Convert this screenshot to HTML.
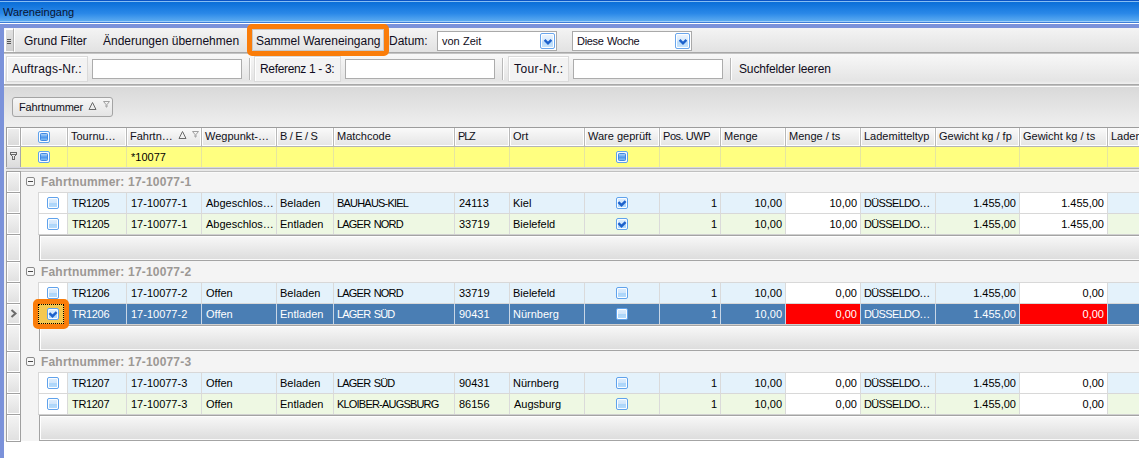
<!DOCTYPE html><html><head><meta charset="utf-8"><style>html,body{margin:0;padding:0}body{width:1139px;height:458px;overflow:hidden;position:relative;background:#fff;font-family:"Liberation Sans",sans-serif}div{box-sizing:border-box}</style></head><body>
<div style="position:absolute;left:0px;top:0px;width:1139px;height:1px;background:#0a52c4"></div>
<div style="position:absolute;left:0px;top:1px;width:1139px;height:1px;background:#86bdf3"></div>
<div style="position:absolute;left:0px;top:2px;width:1139px;height:19px;background:linear-gradient(#0a6ed8,#2a88e8 60%,#5aaaf0)"></div>
<div style="position:absolute;left:0px;top:21px;width:1139px;height:1px;background:#9fd0fa"></div>
<div style="position:absolute;left:0px;top:22px;width:1139px;height:1px;background:#3d7ed8"></div>
<div style="position:absolute;left:0px;top:23px;width:1139px;height:1px;background:#ffffff"></div>
<div style="position:absolute;left:3px;top:5px;white-space:nowrap;font:normal 11px/14px 'Liberation Sans', sans-serif;color:#0a1430;">Wareneingang</div>
<div style="position:absolute;left:0px;top:24px;width:1139px;height:4px;background:#7b92da"></div>
<div style="position:absolute;left:0px;top:24px;width:4px;height:434px;background:#7b92da"></div>
<div style="position:absolute;left:4px;top:28px;width:1135px;height:24px;background:linear-gradient(#f4f4f4,#e2e2e2);border-left:1px solid #fff"></div>
<div style="position:absolute;left:4px;top:52px;width:1135px;height:1px;background:#a8a8a8"></div>
<div style="position:absolute;left:4px;top:53px;width:1135px;height:1px;background:#c4c4c4"></div>
<div style="position:absolute;left:4px;top:28px;width:10px;height:24px;background:linear-gradient(#e2e2e2,#d0d0d0);border:1px solid #fafafa;border-right-color:#b0b0b0;box-shadow:inset 1px 1px 0 #fff"></div>
<div style="position:absolute;left:7px;top:39px;width:4px;height:1px;background:#555555"></div>
<div style="position:absolute;left:7px;top:41px;width:4px;height:1px;background:#555555"></div>
<div style="position:absolute;left:7px;top:43px;width:4px;height:1px;background:#555555"></div>
<div style="position:absolute;left:14px;top:28px;width:1px;height:24px;background:#ffffff"></div>
<div style="position:absolute;left:24px;top:34px;white-space:nowrap;font:normal 12px/15px 'Liberation Sans', sans-serif;color:#100c20;letter-spacing:-0.045px;">Grund Filter</div>
<div style="position:absolute;left:103px;top:34px;white-space:nowrap;font:normal 12px/15px 'Liberation Sans', sans-serif;color:#100c20;">Änderungen übernehmen</div>
<div style="position:absolute;left:252px;top:29px;width:132px;height:22px;background:linear-gradient(#f2f2f2,#e4e4e4);border:1px solid #c8c8c8"></div>
<div style="position:absolute;left:256px;top:34px;white-space:nowrap;font:normal 12px/15px 'Liberation Sans', sans-serif;color:#100c20;letter-spacing:-0.028px;">Sammel Wareneingang</div>
<div style="position:absolute;left:389px;top:34px;white-space:nowrap;font:normal 12px/15px 'Liberation Sans', sans-serif;color:#100c20;">Datum:</div>
<div style="position:absolute;left:437px;top:31px;width:120px;height:20px;background:#fff;border:1px solid #a9a9a9"></div>
<div style="position:absolute;left:442px;top:34px;white-space:nowrap;font:normal 11px/14px 'Liberation Sans', sans-serif;color:#100c20;word-spacing:0.5px;letter-spacing:-0.057px;">von Zeit</div>
<div style="position:absolute;left:540px;top:33px;width:15px;height:16px;border:1px solid #6aa6ec;border-radius:2px;background:linear-gradient(#eef6fe,#d6e9fc 50%,#b8dafa 55%,#c8e4fb);box-shadow:inset 0 0 0 1px #fff"></div>
<svg style="position:absolute;left:543px;top:37px" width="10" height="9" viewBox="0 0 10 9"><path d="M1.6 2.9 L5 6.3 L8.4 2.9" fill="none" stroke="#1e62cc" stroke-width="2.4"/></svg>
<div style="position:absolute;left:572px;top:31px;width:120px;height:20px;background:#fff;border:1px solid #a9a9a9"></div>
<div style="position:absolute;left:577px;top:34px;white-space:nowrap;font:normal 11px/14px 'Liberation Sans', sans-serif;color:#100c20;word-spacing:0.5px;letter-spacing:-0.300px;">Diese Woche</div>
<div style="position:absolute;left:675px;top:33px;width:15px;height:16px;border:1px solid #6aa6ec;border-radius:2px;background:linear-gradient(#eef6fe,#d6e9fc 50%,#b8dafa 55%,#c8e4fb);box-shadow:inset 0 0 0 1px #fff"></div>
<svg style="position:absolute;left:678px;top:37px" width="10" height="9" viewBox="0 0 10 9"><path d="M1.6 2.9 L5 6.3 L8.4 2.9" fill="none" stroke="#1e62cc" stroke-width="2.4"/></svg>
<div style="position:absolute;left:4px;top:54px;width:1135px;height:30px;background:linear-gradient(#f8f8f8,#e4e4e4 90%,#f0f0f0);border-left:1px solid #fff"></div>
<div style="position:absolute;left:4px;top:84px;width:1135px;height:1px;background:#a8a8a8"></div>
<div style="position:absolute;left:4px;top:85px;width:1135px;height:1px;background:#c0c0c0"></div>
<div style="position:absolute;left:4px;top:86px;width:1135px;height:1px;background:#fbfbfb"></div>
<div style="position:absolute;left:6px;top:56px;width:82px;height:26px;background:#f3f3f3;border:1px solid #dadada;box-shadow:inset 1px 1px 0 #fff"></div>
<div style="position:absolute;left:12px;top:62px;white-space:nowrap;font:normal 12px/15px 'Liberation Sans', sans-serif;color:#100c20;letter-spacing:0.183px;">Auftrags-Nr.:</div>
<div style="position:absolute;left:92px;top:59px;width:150px;height:20px;background:#fff;border:1px solid #acacac"></div>
<div style="position:absolute;left:249px;top:58px;width:1px;height:22px;background:#b8b8b8"></div>
<div style="position:absolute;left:250px;top:58px;width:1px;height:22px;background:#ffffff"></div>
<div style="position:absolute;left:254px;top:56px;width:87px;height:26px;background:#f3f3f3;border:1px solid #dadada;box-shadow:inset 1px 1px 0 #fff"></div>
<div style="position:absolute;left:260px;top:62px;white-space:nowrap;font:normal 12px/15px 'Liberation Sans', sans-serif;color:#100c20;letter-spacing:-0.343px;">Referenz 1 - 3:</div>
<div style="position:absolute;left:345px;top:59px;width:150px;height:20px;background:#fff;border:1px solid #acacac"></div>
<div style="position:absolute;left:502px;top:58px;width:1px;height:22px;background:#b8b8b8"></div>
<div style="position:absolute;left:503px;top:58px;width:1px;height:22px;background:#ffffff"></div>
<div style="position:absolute;left:508px;top:56px;width:61px;height:26px;background:#f3f3f3;border:1px solid #dadada;box-shadow:inset 1px 1px 0 #fff"></div>
<div style="position:absolute;left:514px;top:62px;white-space:nowrap;font:normal 12px/15px 'Liberation Sans', sans-serif;color:#100c20;letter-spacing:0.400px;">Tour-Nr.:</div>
<div style="position:absolute;left:573px;top:59px;width:150px;height:20px;background:#fff;border:1px solid #acacac"></div>
<div style="position:absolute;left:730px;top:58px;width:1px;height:22px;background:#b8b8b8"></div>
<div style="position:absolute;left:731px;top:58px;width:1px;height:22px;background:#ffffff"></div>
<div style="position:absolute;left:739px;top:62px;white-space:nowrap;font:normal 12px/15px 'Liberation Sans', sans-serif;color:#100c20;letter-spacing:-0.138px;">Suchfelder leeren</div>
<div style="position:absolute;left:4px;top:87px;width:1135px;height:40px;background:linear-gradient(#d9d9d9,#efefef)"></div>
<div style="position:absolute;left:12px;top:97px;width:101px;height:20px;border:1px solid #a4a4a4;border-radius:3px;background:linear-gradient(#f6f6f6,#e4e4e4)"></div>
<div style="position:absolute;left:19px;top:100px;white-space:nowrap;font:normal 11px/14px 'Liberation Sans', sans-serif;color:#101020;letter-spacing:-0.180px;">Fahrtnummer</div>
<svg style="position:absolute;left:88px;top:101px" width="10" height="10" viewBox="0 0 10 10"><path d="M4.5 1.5 L8 8.5 L1 8.5 Z" fill="none" stroke="#6a6a6a" stroke-width="1"/></svg>
<svg style="position:absolute;left:103px;top:101px" width="8" height="7" viewBox="0 0 8 7"><path d="M0.5 0.5 H6.5 L4 3.5 V6 H3 V3.5 Z" fill="none" stroke="#a0a0a0" stroke-width="1"/></svg>
<div style="position:absolute;left:4px;top:127px;width:1135px;height:331px;background:#ffffff"></div>
<div style="position:absolute;left:4px;top:127px;width:2px;height:314px;background:#f0f0f0"></div>
<svg width="0" height="0" style="position:absolute"><defs><linearGradient id="gc" x1="0" y1="0" x2="0" y2="1"><stop offset="0" stop-color="#dcecfc"/><stop offset="0.5" stop-color="#cfe5fb"/><stop offset="0.5" stop-color="#abd5fa"/><stop offset="1" stop-color="#b4dafb"/></linearGradient><linearGradient id="gi" x1="0" y1="0" x2="0" y2="1"><stop offset="0" stop-color="#b8dafa"/><stop offset="0.55" stop-color="#4f98ec"/><stop offset="1" stop-color="#8cc4f6"/></linearGradient></defs></svg>
<div style="position:absolute;left:6px;top:127px;width:1133px;height:20px;background:linear-gradient(#fafafa,#e4e4e4);border-top:1px solid #9c9c9c;border-left:1px solid #9c9c9c;border-bottom:1px solid #b4b4b4"></div>
<div style="position:absolute;left:7px;top:128px;width:13px;height:18px;background:linear-gradient(#eeeeee,#dadada);box-shadow:inset 1px 1px 0 #fff,inset -1px -1px 0 #fff"></div>
<div style="position:absolute;left:20px;top:128px;width:1px;height:18px;background:#a8a8a8"></div>
<div style="position:absolute;left:21px;top:128px;width:46px;height:18px;box-shadow:inset 1px 0 0 #fff,inset -1px -1px 0 #fff"></div>
<svg style="position:absolute;left:38px;top:131px" width="12" height="12" viewBox="0 0 12 12"><rect x="0.5" y="0.5" width="11" height="11" rx="1.5" fill="#fbfdff" stroke="#5fa2ec"/><rect x="2.5" y="2.5" width="7" height="7" rx="0.8" fill="url(#gi)" stroke="#4088e2"/></svg>
<div style="position:absolute;left:67px;top:128px;width:1px;height:18px;background:#b8b8b8"></div>
<div style="position:absolute;left:68px;top:128px;width:58px;height:18px;box-shadow:inset 1px 0 0 #fff,inset -1px -1px 0 #fff"></div>
<div style="position:absolute;left:71px;top:129px;white-space:nowrap;font:normal 11px/14px 'Liberation Sans', sans-serif;color:#101018;">Tournu…</div>
<div style="position:absolute;left:126px;top:128px;width:1px;height:18px;background:#b8b8b8"></div>
<div style="position:absolute;left:127px;top:128px;width:74px;height:18px;box-shadow:inset 1px 0 0 #fff,inset -1px -1px 0 #fff"></div>
<div style="position:absolute;left:130px;top:129px;white-space:nowrap;font:normal 11px/14px 'Liberation Sans', sans-serif;color:#101018;">Fahrtn…</div>
<div style="position:absolute;left:201px;top:128px;width:1px;height:18px;background:#b8b8b8"></div>
<div style="position:absolute;left:202px;top:128px;width:74px;height:18px;box-shadow:inset 1px 0 0 #fff,inset -1px -1px 0 #fff"></div>
<div style="position:absolute;left:205px;top:129px;white-space:nowrap;font:normal 11px/14px 'Liberation Sans', sans-serif;color:#101018;">Wegpunkt-…</div>
<div style="position:absolute;left:276px;top:128px;width:1px;height:18px;background:#b8b8b8"></div>
<div style="position:absolute;left:277px;top:128px;width:56px;height:18px;box-shadow:inset 1px 0 0 #fff,inset -1px -1px 0 #fff"></div>
<div style="position:absolute;left:280px;top:129px;white-space:nowrap;font:normal 11px/14px 'Liberation Sans', sans-serif;color:#101018;letter-spacing:-0.300px;">B / E / S</div>
<div style="position:absolute;left:333px;top:128px;width:1px;height:18px;background:#b8b8b8"></div>
<div style="position:absolute;left:334px;top:128px;width:120px;height:18px;box-shadow:inset 1px 0 0 #fff,inset -1px -1px 0 #fff"></div>
<div style="position:absolute;left:337px;top:129px;white-space:nowrap;font:normal 11px/14px 'Liberation Sans', sans-serif;color:#101018;">Matchcode</div>
<div style="position:absolute;left:454px;top:128px;width:1px;height:18px;background:#b8b8b8"></div>
<div style="position:absolute;left:455px;top:128px;width:54px;height:18px;box-shadow:inset 1px 0 0 #fff,inset -1px -1px 0 #fff"></div>
<div style="position:absolute;left:458px;top:129px;white-space:nowrap;font:normal 11px/14px 'Liberation Sans', sans-serif;color:#101018;letter-spacing:-1.200px;">PLZ</div>
<div style="position:absolute;left:509px;top:128px;width:1px;height:18px;background:#b8b8b8"></div>
<div style="position:absolute;left:510px;top:128px;width:74px;height:18px;box-shadow:inset 1px 0 0 #fff,inset -1px -1px 0 #fff"></div>
<div style="position:absolute;left:513px;top:129px;white-space:nowrap;font:normal 11px/14px 'Liberation Sans', sans-serif;color:#101018;">Ort</div>
<div style="position:absolute;left:584px;top:128px;width:1px;height:18px;background:#b8b8b8"></div>
<div style="position:absolute;left:585px;top:128px;width:74px;height:18px;box-shadow:inset 1px 0 0 #fff,inset -1px -1px 0 #fff"></div>
<div style="position:absolute;left:588px;top:129px;white-space:nowrap;font:normal 11px/14px 'Liberation Sans', sans-serif;color:#101018;">Ware geprüft</div>
<div style="position:absolute;left:659px;top:128px;width:1px;height:18px;background:#b8b8b8"></div>
<div style="position:absolute;left:660px;top:128px;width:60px;height:18px;box-shadow:inset 1px 0 0 #fff,inset -1px -1px 0 #fff"></div>
<div style="position:absolute;left:663px;top:129px;white-space:nowrap;font:normal 11px/14px 'Liberation Sans', sans-serif;color:#101018;letter-spacing:-0.457px;">Pos. UWP</div>
<div style="position:absolute;left:720px;top:128px;width:1px;height:18px;background:#b8b8b8"></div>
<div style="position:absolute;left:721px;top:128px;width:64px;height:18px;box-shadow:inset 1px 0 0 #fff,inset -1px -1px 0 #fff"></div>
<div style="position:absolute;left:724px;top:129px;white-space:nowrap;font:normal 11px/14px 'Liberation Sans', sans-serif;color:#101018;">Menge</div>
<div style="position:absolute;left:785px;top:128px;width:1px;height:18px;background:#b8b8b8"></div>
<div style="position:absolute;left:786px;top:128px;width:74px;height:18px;box-shadow:inset 1px 0 0 #fff,inset -1px -1px 0 #fff"></div>
<div style="position:absolute;left:789px;top:129px;white-space:nowrap;font:normal 11px/14px 'Liberation Sans', sans-serif;color:#101018;">Menge / ts</div>
<div style="position:absolute;left:860px;top:128px;width:1px;height:18px;background:#b8b8b8"></div>
<div style="position:absolute;left:861px;top:128px;width:74px;height:18px;box-shadow:inset 1px 0 0 #fff,inset -1px -1px 0 #fff"></div>
<div style="position:absolute;left:864px;top:129px;white-space:nowrap;font:normal 11px/14px 'Liberation Sans', sans-serif;color:#101018;">Lademitteltyp</div>
<div style="position:absolute;left:935px;top:128px;width:1px;height:18px;background:#b8b8b8"></div>
<div style="position:absolute;left:936px;top:128px;width:83px;height:18px;box-shadow:inset 1px 0 0 #fff,inset -1px -1px 0 #fff"></div>
<div style="position:absolute;left:939px;top:129px;white-space:nowrap;font:normal 11px/14px 'Liberation Sans', sans-serif;color:#101018;">Gewicht kg / fp</div>
<div style="position:absolute;left:1019px;top:128px;width:1px;height:18px;background:#b8b8b8"></div>
<div style="position:absolute;left:1020px;top:128px;width:87px;height:18px;box-shadow:inset 1px 0 0 #fff,inset -1px -1px 0 #fff"></div>
<div style="position:absolute;left:1023px;top:129px;white-space:nowrap;font:normal 11px/14px 'Liberation Sans', sans-serif;color:#101018;">Gewicht kg / ts</div>
<div style="position:absolute;left:1107px;top:128px;width:1px;height:18px;background:#b8b8b8"></div>
<div style="position:absolute;left:1108px;top:128px;width:31px;height:18px;box-shadow:inset 1px 0 0 #fff,inset -1px -1px 0 #fff"></div>
<div style="position:absolute;left:1111px;top:129px;white-space:nowrap;font:normal 11px/14px 'Liberation Sans', sans-serif;color:#101018;">Laden</div>
<svg style="position:absolute;left:178px;top:130px" width="10" height="10" viewBox="0 0 10 10"><path d="M4.5 1.5 L8 8.5 L1 8.5 Z" fill="none" stroke="#6a6a6a" stroke-width="1"/></svg>
<svg style="position:absolute;left:192px;top:131px" width="8" height="7" viewBox="0 0 8 7"><path d="M0.5 0.5 H6.5 L4 3.5 V6 H3 V3.5 Z" fill="none" stroke="#a0a0a0" stroke-width="1"/></svg>
<div style="position:absolute;left:6px;top:147px;width:1133px;height:20px;background:#ffff80;border-left:1px solid #9c9c9c"></div>
<div style="position:absolute;left:7px;top:147px;width:13px;height:20px;background:linear-gradient(#f0f0f0,#dcdcdc);border-top:1px solid #fff"></div>
<div style="position:absolute;left:20px;top:147px;width:1px;height:20px;background:#a8a8a8"></div>
<div style="position:absolute;left:67px;top:147px;width:1px;height:20px;background:#e6e6a0"></div>
<div style="position:absolute;left:126px;top:147px;width:1px;height:20px;background:#e6e6a0"></div>
<div style="position:absolute;left:201px;top:147px;width:1px;height:20px;background:#e6e6a0"></div>
<div style="position:absolute;left:276px;top:147px;width:1px;height:20px;background:#e6e6a0"></div>
<div style="position:absolute;left:333px;top:147px;width:1px;height:20px;background:#e6e6a0"></div>
<div style="position:absolute;left:454px;top:147px;width:1px;height:20px;background:#e6e6a0"></div>
<div style="position:absolute;left:509px;top:147px;width:1px;height:20px;background:#e6e6a0"></div>
<div style="position:absolute;left:584px;top:147px;width:1px;height:20px;background:#e6e6a0"></div>
<div style="position:absolute;left:659px;top:147px;width:1px;height:20px;background:#e6e6a0"></div>
<div style="position:absolute;left:720px;top:147px;width:1px;height:20px;background:#e6e6a0"></div>
<div style="position:absolute;left:785px;top:147px;width:1px;height:20px;background:#e6e6a0"></div>
<div style="position:absolute;left:860px;top:147px;width:1px;height:20px;background:#e6e6a0"></div>
<div style="position:absolute;left:935px;top:147px;width:1px;height:20px;background:#e6e6a0"></div>
<div style="position:absolute;left:1019px;top:147px;width:1px;height:20px;background:#e6e6a0"></div>
<div style="position:absolute;left:1107px;top:147px;width:1px;height:20px;background:#e6e6a0"></div>
<svg style="position:absolute;left:38px;top:151px" width="12" height="12" viewBox="0 0 12 12"><rect x="0.5" y="0.5" width="11" height="11" rx="1.5" fill="#fbfdff" stroke="#5fa2ec"/><rect x="2.5" y="2.5" width="7" height="7" rx="0.8" fill="url(#gi)" stroke="#4088e2"/></svg>
<svg style="position:absolute;left:616px;top:151px" width="12" height="12" viewBox="0 0 12 12"><rect x="0.5" y="0.5" width="11" height="11" rx="1.5" fill="#fbfdff" stroke="#5fa2ec"/><rect x="2.5" y="2.5" width="7" height="7" rx="0.8" fill="url(#gi)" stroke="#4088e2"/></svg>
<div style="position:absolute;left:131px;top:150px;white-space:nowrap;font:normal 11px/14px 'Liberation Sans', sans-serif;color:#000;">*10077</div>
<svg style="position:absolute;left:10px;top:152px" width="7" height="8" viewBox="0 0 7 8" shape-rendering="crispEdges" fill="#6a6a6a"><rect x="0" y="0" width="1" height="1"/><rect x="1" y="0" width="1" height="1"/><rect x="2" y="0" width="1" height="1"/><rect x="3" y="0" width="1" height="1"/><rect x="4" y="0" width="1" height="1"/><rect x="5" y="0" width="1" height="1"/><rect x="6" y="0" width="1" height="1"/><rect x="0" y="1" width="1" height="1"/><rect x="6" y="1" width="1" height="1"/><rect x="0" y="2" width="1" height="1"/><rect x="1" y="2" width="1" height="1"/><rect x="2" y="2" width="1" height="1"/><rect x="3" y="2" width="1" height="1"/><rect x="4" y="2" width="1" height="1"/><rect x="5" y="2" width="1" height="1"/><rect x="6" y="2" width="1" height="1"/><rect x="1" y="3" width="1" height="1"/><rect x="5" y="3" width="1" height="1"/><rect x="2" y="4" width="1" height="1"/><rect x="4" y="4" width="1" height="1"/><rect x="2" y="5" width="1" height="1"/><rect x="4" y="5" width="1" height="1"/><rect x="2" y="6" width="1" height="1"/><rect x="4" y="6" width="1" height="1"/><rect x="2" y="7" width="1" height="1"/><rect x="3" y="7" width="1" height="1"/><rect x="4" y="7" width="1" height="1"/></svg>
<div style="position:absolute;left:6px;top:167px;width:1133px;height:1px;background:#d6d6de"></div>
<div style="position:absolute;left:6px;top:168px;width:1133px;height:1px;background:#b4b4b4"></div>
<div style="position:absolute;left:6px;top:169px;width:1133px;height:2px;background:#e8e8e8"></div>
<div style="position:absolute;left:6px;top:171px;width:1px;height:270px;background:#a4a4a4"></div>
<div style="position:absolute;left:21px;top:171px;width:1118px;height:270px;background:#f4f4f4"></div>
<div style="position:absolute;left:6px;top:171px;width:15px;height:22px;background:linear-gradient(#f4f4f4,#e0e0e0);border:1px solid #a0a0a0;box-shadow:inset 1px 1px 0 #fff,inset -1px -1px 0 #fff"></div>
<div style="position:absolute;left:21px;top:171px;width:1118px;height:21px;background:#f4f4f4"></div>
<div style="position:absolute;left:21px;top:171px;width:1118px;height:1px;background:#c0c0c0"></div>
<div style="position:absolute;left:21px;top:172px;width:1118px;height:1px;background:#fafafa"></div>
<svg style="position:absolute;left:26px;top:177px" width="9" height="9" viewBox="0 0 9 9"><rect x="0.5" y="0.5" width="8" height="8" rx="1.5" fill="#f8f8f8" stroke="#8a8a8a"/><path d="M2 4.5 H7" stroke="#4a4a4a" stroke-width="1"/></svg>
<div style="position:absolute;left:41px;top:175px;white-space:nowrap;font:bold 12px/15px 'Liberation Sans', sans-serif;color:#9c9894;letter-spacing:0.182px;">Fahrtnummer: 17-10077-1</div>
<div style="position:absolute;left:6px;top:192px;width:15px;height:22px;background:linear-gradient(#f4f4f4,#e0e0e0);border:1px solid #a0a0a0;box-shadow:inset 1px 1px 0 #fff,inset -1px -1px 0 #fff"></div>
<div style="position:absolute;left:38px;top:192px;width:1101px;height:22px;background:#e4f2fb;border-top:1px solid #d8d8d8;border-left:1px solid #d8d8d8"></div>
<div style="position:absolute;left:39px;top:193px;width:28px;height:20px;background:#ffffff"></div>
<svg style="position:absolute;left:47px;top:197px;" width="12" height="12" viewBox="0 0 12 12"><rect x="0.5" y="0.5" width="11" height="11" rx="1.5" fill="#fbfdff" stroke="#5fa2ec"/><rect x="2" y="2" width="8" height="8" fill="url(#gc)"/></svg>
<div style="position:absolute;left:67px;top:193px;width:1px;height:21px;background:#d8d8d8"></div>
<div style="position:absolute;left:67px;top:193px;width:1px;height:20px;background:#dadada"></div>
<div style="position:absolute;left:72px;top:196px;white-space:nowrap;font:normal 11px/14px 'Liberation Sans', sans-serif;color:#000000;letter-spacing:-0.320px;word-spacing:0.620px;">TR1205</div>
<div style="position:absolute;left:126px;top:193px;width:1px;height:20px;background:#dadada"></div>
<div style="position:absolute;left:131px;top:196px;white-space:nowrap;font:normal 11px/14px 'Liberation Sans', sans-serif;color:#000000;">17-10077-1</div>
<div style="position:absolute;left:201px;top:193px;width:1px;height:20px;background:#dadada"></div>
<div style="position:absolute;left:206px;top:196px;white-space:nowrap;font:normal 11px/14px 'Liberation Sans', sans-serif;color:#000000;">Abgeschlos…</div>
<div style="position:absolute;left:276px;top:193px;width:1px;height:20px;background:#dadada"></div>
<div style="position:absolute;left:280px;top:196px;white-space:nowrap;font:normal 11px/14px 'Liberation Sans', sans-serif;color:#000000;">Beladen</div>
<div style="position:absolute;left:333px;top:193px;width:1px;height:20px;background:#dadada"></div>
<div style="position:absolute;left:337px;top:196px;white-space:nowrap;font:normal 11px/14px 'Liberation Sans', sans-serif;color:#000000;letter-spacing:-0.800px;word-spacing:1.100px;">BAUHAUS-KIEL</div>
<div style="position:absolute;left:454px;top:193px;width:1px;height:20px;background:#dadada"></div>
<div style="position:absolute;left:459px;top:196px;white-space:nowrap;font:normal 11px/14px 'Liberation Sans', sans-serif;color:#000000;">24113</div>
<div style="position:absolute;left:509px;top:193px;width:1px;height:20px;background:#dadada"></div>
<div style="position:absolute;left:513px;top:196px;white-space:nowrap;font:normal 11px/14px 'Liberation Sans', sans-serif;color:#000000;">Kiel</div>
<div style="position:absolute;left:584px;top:193px;width:1px;height:20px;background:#dadada"></div>
<svg style="position:absolute;left:616px;top:197px" width="12" height="12" viewBox="0 0 12 12"><rect x="0.5" y="0.5" width="11" height="11" rx="1.5" fill="#fbfdff" stroke="#5fa2ec"/><rect x="2" y="2" width="8" height="8" fill="url(#gc)"/><path d="M2.4 5.1 L5.5 8.2 L9.6 4.1" fill="none" stroke="#1e62cc" stroke-width="2.4"/></svg>
<div style="position:absolute;left:659px;top:193px;width:1px;height:20px;background:#dadada"></div>
<div style="position:absolute;right:422px;top:196px;white-space:nowrap;font:normal 11px/14px 'Liberation Sans', sans-serif;color:#000000;text-align:right;">1</div>
<div style="position:absolute;left:720px;top:193px;width:1px;height:20px;background:#dadada"></div>
<div style="position:absolute;right:357px;top:196px;white-space:nowrap;font:normal 11px/14px 'Liberation Sans', sans-serif;color:#000000;text-align:right;">10,00</div>
<div style="position:absolute;left:785px;top:193px;width:1px;height:20px;background:#dadada"></div>
<div style="position:absolute;left:786px;top:193px;width:74px;height:20px;background:#ffffff"></div>
<div style="position:absolute;right:282px;top:196px;white-space:nowrap;font:normal 11px/14px 'Liberation Sans', sans-serif;color:#000000;text-align:right;">10,00</div>
<div style="position:absolute;left:860px;top:193px;width:1px;height:20px;background:#dadada"></div>
<div style="position:absolute;left:864px;top:196px;white-space:nowrap;font:normal 11px/14px 'Liberation Sans', sans-serif;color:#000000;letter-spacing:-0.650px;word-spacing:0.950px;">DÜSSELDO…</div>
<div style="position:absolute;left:935px;top:193px;width:1px;height:20px;background:#dadada"></div>
<div style="position:absolute;right:123px;top:196px;white-space:nowrap;font:normal 11px/14px 'Liberation Sans', sans-serif;color:#000000;text-align:right;">1.455,00</div>
<div style="position:absolute;left:1019px;top:193px;width:1px;height:20px;background:#dadada"></div>
<div style="position:absolute;left:1020px;top:193px;width:87px;height:20px;background:#ffffff"></div>
<div style="position:absolute;right:35px;top:196px;white-space:nowrap;font:normal 11px/14px 'Liberation Sans', sans-serif;color:#000000;text-align:right;">1.455,00</div>
<div style="position:absolute;left:1107px;top:193px;width:1px;height:20px;background:#dadada"></div>
<div style="position:absolute;left:6px;top:213px;width:15px;height:22px;background:linear-gradient(#f4f4f4,#e0e0e0);border:1px solid #a0a0a0;box-shadow:inset 1px 1px 0 #fff,inset -1px -1px 0 #fff"></div>
<div style="position:absolute;left:38px;top:213px;width:1101px;height:22px;background:#eef8e3;border-top:1px solid #d8d8d8;border-left:1px solid #d8d8d8"></div>
<div style="position:absolute;left:39px;top:214px;width:28px;height:20px;background:#ffffff"></div>
<svg style="position:absolute;left:47px;top:218px;" width="12" height="12" viewBox="0 0 12 12"><rect x="0.5" y="0.5" width="11" height="11" rx="1.5" fill="#fbfdff" stroke="#5fa2ec"/><rect x="2" y="2" width="8" height="8" fill="url(#gc)"/></svg>
<div style="position:absolute;left:67px;top:214px;width:1px;height:21px;background:#d8d8d8"></div>
<div style="position:absolute;left:67px;top:214px;width:1px;height:20px;background:#dadada"></div>
<div style="position:absolute;left:72px;top:217px;white-space:nowrap;font:normal 11px/14px 'Liberation Sans', sans-serif;color:#000000;letter-spacing:-0.320px;word-spacing:0.620px;">TR1205</div>
<div style="position:absolute;left:126px;top:214px;width:1px;height:20px;background:#dadada"></div>
<div style="position:absolute;left:131px;top:217px;white-space:nowrap;font:normal 11px/14px 'Liberation Sans', sans-serif;color:#000000;">17-10077-1</div>
<div style="position:absolute;left:201px;top:214px;width:1px;height:20px;background:#dadada"></div>
<div style="position:absolute;left:206px;top:217px;white-space:nowrap;font:normal 11px/14px 'Liberation Sans', sans-serif;color:#000000;">Abgeschlos…</div>
<div style="position:absolute;left:276px;top:214px;width:1px;height:20px;background:#dadada"></div>
<div style="position:absolute;left:280px;top:217px;white-space:nowrap;font:normal 11px/14px 'Liberation Sans', sans-serif;color:#000000;">Entladen</div>
<div style="position:absolute;left:333px;top:214px;width:1px;height:20px;background:#dadada"></div>
<div style="position:absolute;left:337px;top:217px;white-space:nowrap;font:normal 11px/14px 'Liberation Sans', sans-serif;color:#000000;letter-spacing:-0.800px;word-spacing:1.100px;">LAGER NORD</div>
<div style="position:absolute;left:454px;top:214px;width:1px;height:20px;background:#dadada"></div>
<div style="position:absolute;left:459px;top:217px;white-space:nowrap;font:normal 11px/14px 'Liberation Sans', sans-serif;color:#000000;">33719</div>
<div style="position:absolute;left:509px;top:214px;width:1px;height:20px;background:#dadada"></div>
<div style="position:absolute;left:513px;top:217px;white-space:nowrap;font:normal 11px/14px 'Liberation Sans', sans-serif;color:#000000;">Bielefeld</div>
<div style="position:absolute;left:584px;top:214px;width:1px;height:20px;background:#dadada"></div>
<svg style="position:absolute;left:616px;top:218px" width="12" height="12" viewBox="0 0 12 12"><rect x="0.5" y="0.5" width="11" height="11" rx="1.5" fill="#fbfdff" stroke="#5fa2ec"/><rect x="2" y="2" width="8" height="8" fill="url(#gc)"/><path d="M2.4 5.1 L5.5 8.2 L9.6 4.1" fill="none" stroke="#1e62cc" stroke-width="2.4"/></svg>
<div style="position:absolute;left:659px;top:214px;width:1px;height:20px;background:#dadada"></div>
<div style="position:absolute;right:422px;top:217px;white-space:nowrap;font:normal 11px/14px 'Liberation Sans', sans-serif;color:#000000;text-align:right;">1</div>
<div style="position:absolute;left:720px;top:214px;width:1px;height:20px;background:#dadada"></div>
<div style="position:absolute;right:357px;top:217px;white-space:nowrap;font:normal 11px/14px 'Liberation Sans', sans-serif;color:#000000;text-align:right;">10,00</div>
<div style="position:absolute;left:785px;top:214px;width:1px;height:20px;background:#dadada"></div>
<div style="position:absolute;left:786px;top:214px;width:74px;height:20px;background:#ffffff"></div>
<div style="position:absolute;right:282px;top:217px;white-space:nowrap;font:normal 11px/14px 'Liberation Sans', sans-serif;color:#000000;text-align:right;">10,00</div>
<div style="position:absolute;left:860px;top:214px;width:1px;height:20px;background:#dadada"></div>
<div style="position:absolute;left:864px;top:217px;white-space:nowrap;font:normal 11px/14px 'Liberation Sans', sans-serif;color:#000000;letter-spacing:-0.650px;word-spacing:0.950px;">DÜSSELDO…</div>
<div style="position:absolute;left:935px;top:214px;width:1px;height:20px;background:#dadada"></div>
<div style="position:absolute;right:123px;top:217px;white-space:nowrap;font:normal 11px/14px 'Liberation Sans', sans-serif;color:#000000;text-align:right;">1.455,00</div>
<div style="position:absolute;left:1019px;top:214px;width:1px;height:20px;background:#dadada"></div>
<div style="position:absolute;left:1020px;top:214px;width:87px;height:20px;background:#ffffff"></div>
<div style="position:absolute;right:35px;top:217px;white-space:nowrap;font:normal 11px/14px 'Liberation Sans', sans-serif;color:#000000;text-align:right;">1.455,00</div>
<div style="position:absolute;left:1107px;top:214px;width:1px;height:20px;background:#dadada"></div>
<div style="position:absolute;left:38px;top:234px;width:1101px;height:1px;background:#d0d0d0"></div>
<div style="position:absolute;left:6px;top:234px;width:15px;height:28px;background:linear-gradient(#f4f4f4,#e0e0e0);border:1px solid #a0a0a0;box-shadow:inset 1px 1px 0 #fff,inset -1px -1px 0 #fff"></div>
<div style="position:absolute;left:39px;top:235px;width:1100px;height:26px;background:linear-gradient(#f8f8f8,#dcdcdc);border:1px solid #a4a4a4;border-right:none;box-shadow:inset 1px 1px 0 #fff,inset 0 -1px 0 #fafafa"></div>
<div style="position:absolute;left:6px;top:261px;width:15px;height:22px;background:linear-gradient(#f4f4f4,#e0e0e0);border:1px solid #a0a0a0;box-shadow:inset 1px 1px 0 #fff,inset -1px -1px 0 #fff"></div>
<div style="position:absolute;left:21px;top:261px;width:1118px;height:21px;background:#f4f4f4"></div>
<svg style="position:absolute;left:26px;top:267px" width="9" height="9" viewBox="0 0 9 9"><rect x="0.5" y="0.5" width="8" height="8" rx="1.5" fill="#f8f8f8" stroke="#8a8a8a"/><path d="M2 4.5 H7" stroke="#4a4a4a" stroke-width="1"/></svg>
<div style="position:absolute;left:41px;top:265px;white-space:nowrap;font:bold 12px/15px 'Liberation Sans', sans-serif;color:#9c9894;letter-spacing:0.182px;">Fahrtnummer: 17-10077-2</div>
<div style="position:absolute;left:6px;top:282px;width:15px;height:22px;background:linear-gradient(#f4f4f4,#e0e0e0);border:1px solid #a0a0a0;box-shadow:inset 1px 1px 0 #fff,inset -1px -1px 0 #fff"></div>
<div style="position:absolute;left:38px;top:282px;width:1101px;height:22px;background:#e4f2fb;border-top:1px solid #d8d8d8;border-left:1px solid #d8d8d8"></div>
<div style="position:absolute;left:39px;top:283px;width:28px;height:20px;background:#ffffff"></div>
<svg style="position:absolute;left:47px;top:287px;" width="12" height="12" viewBox="0 0 12 12"><rect x="0.5" y="0.5" width="11" height="11" rx="1.5" fill="#fbfdff" stroke="#5fa2ec"/><rect x="2" y="2" width="8" height="8" fill="url(#gc)"/></svg>
<div style="position:absolute;left:67px;top:283px;width:1px;height:21px;background:#d8d8d8"></div>
<div style="position:absolute;left:67px;top:283px;width:1px;height:20px;background:#dadada"></div>
<div style="position:absolute;left:72px;top:286px;white-space:nowrap;font:normal 11px/14px 'Liberation Sans', sans-serif;color:#000000;letter-spacing:-0.320px;word-spacing:0.620px;">TR1206</div>
<div style="position:absolute;left:126px;top:283px;width:1px;height:20px;background:#dadada"></div>
<div style="position:absolute;left:131px;top:286px;white-space:nowrap;font:normal 11px/14px 'Liberation Sans', sans-serif;color:#000000;">17-10077-2</div>
<div style="position:absolute;left:201px;top:283px;width:1px;height:20px;background:#dadada"></div>
<div style="position:absolute;left:206px;top:286px;white-space:nowrap;font:normal 11px/14px 'Liberation Sans', sans-serif;color:#000000;">Offen</div>
<div style="position:absolute;left:276px;top:283px;width:1px;height:20px;background:#dadada"></div>
<div style="position:absolute;left:280px;top:286px;white-space:nowrap;font:normal 11px/14px 'Liberation Sans', sans-serif;color:#000000;">Beladen</div>
<div style="position:absolute;left:333px;top:283px;width:1px;height:20px;background:#dadada"></div>
<div style="position:absolute;left:337px;top:286px;white-space:nowrap;font:normal 11px/14px 'Liberation Sans', sans-serif;color:#000000;letter-spacing:-0.800px;word-spacing:1.100px;">LAGER NORD</div>
<div style="position:absolute;left:454px;top:283px;width:1px;height:20px;background:#dadada"></div>
<div style="position:absolute;left:459px;top:286px;white-space:nowrap;font:normal 11px/14px 'Liberation Sans', sans-serif;color:#000000;">33719</div>
<div style="position:absolute;left:509px;top:283px;width:1px;height:20px;background:#dadada"></div>
<div style="position:absolute;left:513px;top:286px;white-space:nowrap;font:normal 11px/14px 'Liberation Sans', sans-serif;color:#000000;">Bielefeld</div>
<div style="position:absolute;left:584px;top:283px;width:1px;height:20px;background:#dadada"></div>
<svg style="position:absolute;left:616px;top:287px;" width="12" height="12" viewBox="0 0 12 12"><rect x="0.5" y="0.5" width="11" height="11" rx="1.5" fill="#fbfdff" stroke="#5fa2ec"/><rect x="2" y="2" width="8" height="8" fill="url(#gc)"/></svg>
<div style="position:absolute;left:659px;top:283px;width:1px;height:20px;background:#dadada"></div>
<div style="position:absolute;right:422px;top:286px;white-space:nowrap;font:normal 11px/14px 'Liberation Sans', sans-serif;color:#000000;text-align:right;">1</div>
<div style="position:absolute;left:720px;top:283px;width:1px;height:20px;background:#dadada"></div>
<div style="position:absolute;right:357px;top:286px;white-space:nowrap;font:normal 11px/14px 'Liberation Sans', sans-serif;color:#000000;text-align:right;">10,00</div>
<div style="position:absolute;left:785px;top:283px;width:1px;height:20px;background:#dadada"></div>
<div style="position:absolute;left:786px;top:283px;width:74px;height:20px;background:#ffffff"></div>
<div style="position:absolute;right:282px;top:286px;white-space:nowrap;font:normal 11px/14px 'Liberation Sans', sans-serif;color:#000000;text-align:right;">0,00</div>
<div style="position:absolute;left:860px;top:283px;width:1px;height:20px;background:#dadada"></div>
<div style="position:absolute;left:864px;top:286px;white-space:nowrap;font:normal 11px/14px 'Liberation Sans', sans-serif;color:#000000;letter-spacing:-0.650px;word-spacing:0.950px;">DÜSSELDO…</div>
<div style="position:absolute;left:935px;top:283px;width:1px;height:20px;background:#dadada"></div>
<div style="position:absolute;right:123px;top:286px;white-space:nowrap;font:normal 11px/14px 'Liberation Sans', sans-serif;color:#000000;text-align:right;">1.455,00</div>
<div style="position:absolute;left:1019px;top:283px;width:1px;height:20px;background:#dadada"></div>
<div style="position:absolute;left:1020px;top:283px;width:87px;height:20px;background:#ffffff"></div>
<div style="position:absolute;right:35px;top:286px;white-space:nowrap;font:normal 11px/14px 'Liberation Sans', sans-serif;color:#000000;text-align:right;">0,00</div>
<div style="position:absolute;left:1107px;top:283px;width:1px;height:20px;background:#dadada"></div>
<div style="position:absolute;left:6px;top:303px;width:15px;height:22px;background:linear-gradient(#f4f4f4,#e0e0e0);border:1px solid #a0a0a0;box-shadow:inset 1px 1px 0 #fff,inset -1px -1px 0 #fff"></div>
<div style="position:absolute;left:38px;top:303px;width:1101px;height:22px;background:#4a7eb4;border-top:1px solid #d8d8d8;border-left:1px solid #d8d8d8"></div>
<div style="position:absolute;left:39px;top:304px;width:28px;height:20px;background:#ffffff"></div>
<svg style="position:absolute;left:47px;top:308px;" width="12" height="12" viewBox="0 0 12 12"><rect x="0.5" y="0.5" width="11" height="11" rx="1.5" fill="#fbfdff" stroke="#5fa2ec"/><rect x="2" y="2" width="8" height="8" fill="url(#gc)"/></svg>
<div style="position:absolute;left:67px;top:304px;width:1px;height:21px;background:#e0e8f0"></div>
<div style="position:absolute;left:67px;top:304px;width:1px;height:20px;background:#c8d6e6"></div>
<div style="position:absolute;left:72px;top:307px;white-space:nowrap;font:normal 11px/14px 'Liberation Sans', sans-serif;color:#ffffff;letter-spacing:-0.320px;word-spacing:0.620px;">TR1206</div>
<div style="position:absolute;left:126px;top:304px;width:1px;height:20px;background:#c8d6e6"></div>
<div style="position:absolute;left:131px;top:307px;white-space:nowrap;font:normal 11px/14px 'Liberation Sans', sans-serif;color:#ffffff;">17-10077-2</div>
<div style="position:absolute;left:201px;top:304px;width:1px;height:20px;background:#c8d6e6"></div>
<div style="position:absolute;left:206px;top:307px;white-space:nowrap;font:normal 11px/14px 'Liberation Sans', sans-serif;color:#ffffff;">Offen</div>
<div style="position:absolute;left:276px;top:304px;width:1px;height:20px;background:#c8d6e6"></div>
<div style="position:absolute;left:280px;top:307px;white-space:nowrap;font:normal 11px/14px 'Liberation Sans', sans-serif;color:#ffffff;">Entladen</div>
<div style="position:absolute;left:333px;top:304px;width:1px;height:20px;background:#c8d6e6"></div>
<div style="position:absolute;left:337px;top:307px;white-space:nowrap;font:normal 11px/14px 'Liberation Sans', sans-serif;color:#ffffff;letter-spacing:-0.800px;word-spacing:1.100px;">LAGER SÜD</div>
<div style="position:absolute;left:454px;top:304px;width:1px;height:20px;background:#c8d6e6"></div>
<div style="position:absolute;left:459px;top:307px;white-space:nowrap;font:normal 11px/14px 'Liberation Sans', sans-serif;color:#ffffff;">90431</div>
<div style="position:absolute;left:509px;top:304px;width:1px;height:20px;background:#c8d6e6"></div>
<div style="position:absolute;left:513px;top:307px;white-space:nowrap;font:normal 11px/14px 'Liberation Sans', sans-serif;color:#ffffff;">Nürnberg</div>
<div style="position:absolute;left:584px;top:304px;width:1px;height:20px;background:#c8d6e6"></div>
<svg style="position:absolute;left:616px;top:308px;" width="12" height="12" viewBox="0 0 12 12"><rect x="0.5" y="0.5" width="11" height="11" rx="1.5" fill="#fbfdff" stroke="#5fa2ec"/><rect x="2" y="2" width="8" height="8" fill="url(#gc)"/></svg>
<div style="position:absolute;left:659px;top:304px;width:1px;height:20px;background:#c8d6e6"></div>
<div style="position:absolute;right:422px;top:307px;white-space:nowrap;font:normal 11px/14px 'Liberation Sans', sans-serif;color:#ffffff;text-align:right;">1</div>
<div style="position:absolute;left:720px;top:304px;width:1px;height:20px;background:#c8d6e6"></div>
<div style="position:absolute;right:357px;top:307px;white-space:nowrap;font:normal 11px/14px 'Liberation Sans', sans-serif;color:#ffffff;text-align:right;">10,00</div>
<div style="position:absolute;left:785px;top:304px;width:1px;height:20px;background:#c8d6e6"></div>
<div style="position:absolute;left:786px;top:304px;width:74px;height:20px;background:#ff0000"></div>
<div style="position:absolute;right:282px;top:307px;white-space:nowrap;font:normal 11px/14px 'Liberation Sans', sans-serif;color:#ffffff;text-align:right;">0,00</div>
<div style="position:absolute;left:860px;top:304px;width:1px;height:20px;background:#c8d6e6"></div>
<div style="position:absolute;left:864px;top:307px;white-space:nowrap;font:normal 11px/14px 'Liberation Sans', sans-serif;color:#ffffff;letter-spacing:-0.650px;word-spacing:0.950px;">DÜSSELDO…</div>
<div style="position:absolute;left:935px;top:304px;width:1px;height:20px;background:#c8d6e6"></div>
<div style="position:absolute;right:123px;top:307px;white-space:nowrap;font:normal 11px/14px 'Liberation Sans', sans-serif;color:#ffffff;text-align:right;">1.455,00</div>
<div style="position:absolute;left:1019px;top:304px;width:1px;height:20px;background:#c8d6e6"></div>
<div style="position:absolute;left:1020px;top:304px;width:87px;height:20px;background:#ff0000"></div>
<div style="position:absolute;right:35px;top:307px;white-space:nowrap;font:normal 11px/14px 'Liberation Sans', sans-serif;color:#ffffff;text-align:right;">0,00</div>
<div style="position:absolute;left:1107px;top:304px;width:1px;height:20px;background:#c8d6e6"></div>
<svg style="position:absolute;left:10px;top:309px" width="8" height="9" viewBox="0 0 8 9"><path d="M1.5 1 L5.5 4.5 L1.5 8" fill="none" stroke="#6a6a6a" stroke-width="2"/></svg>
<div style="position:absolute;left:38px;top:324px;width:1101px;height:1px;background:#d0d0d0"></div>
<div style="position:absolute;left:6px;top:324px;width:15px;height:28px;background:linear-gradient(#f4f4f4,#e0e0e0);border:1px solid #a0a0a0;box-shadow:inset 1px 1px 0 #fff,inset -1px -1px 0 #fff"></div>
<div style="position:absolute;left:39px;top:325px;width:1100px;height:26px;background:linear-gradient(#f8f8f8,#dcdcdc);border:1px solid #a4a4a4;border-right:none;box-shadow:inset 1px 1px 0 #fff,inset 0 -1px 0 #fafafa"></div>
<div style="position:absolute;left:6px;top:351px;width:15px;height:22px;background:linear-gradient(#f4f4f4,#e0e0e0);border:1px solid #a0a0a0;box-shadow:inset 1px 1px 0 #fff,inset -1px -1px 0 #fff"></div>
<div style="position:absolute;left:21px;top:351px;width:1118px;height:21px;background:#f4f4f4"></div>
<svg style="position:absolute;left:26px;top:357px" width="9" height="9" viewBox="0 0 9 9"><rect x="0.5" y="0.5" width="8" height="8" rx="1.5" fill="#f8f8f8" stroke="#8a8a8a"/><path d="M2 4.5 H7" stroke="#4a4a4a" stroke-width="1"/></svg>
<div style="position:absolute;left:41px;top:355px;white-space:nowrap;font:bold 12px/15px 'Liberation Sans', sans-serif;color:#9c9894;letter-spacing:0.182px;">Fahrtnummer: 17-10077-3</div>
<div style="position:absolute;left:6px;top:372px;width:15px;height:22px;background:linear-gradient(#f4f4f4,#e0e0e0);border:1px solid #a0a0a0;box-shadow:inset 1px 1px 0 #fff,inset -1px -1px 0 #fff"></div>
<div style="position:absolute;left:38px;top:372px;width:1101px;height:22px;background:#e4f2fb;border-top:1px solid #d8d8d8;border-left:1px solid #d8d8d8"></div>
<div style="position:absolute;left:39px;top:373px;width:28px;height:20px;background:#ffffff"></div>
<svg style="position:absolute;left:47px;top:377px;" width="12" height="12" viewBox="0 0 12 12"><rect x="0.5" y="0.5" width="11" height="11" rx="1.5" fill="#fbfdff" stroke="#5fa2ec"/><rect x="2" y="2" width="8" height="8" fill="url(#gc)"/></svg>
<div style="position:absolute;left:67px;top:373px;width:1px;height:21px;background:#d8d8d8"></div>
<div style="position:absolute;left:67px;top:373px;width:1px;height:20px;background:#dadada"></div>
<div style="position:absolute;left:72px;top:376px;white-space:nowrap;font:normal 11px/14px 'Liberation Sans', sans-serif;color:#000000;letter-spacing:-0.320px;word-spacing:0.620px;">TR1207</div>
<div style="position:absolute;left:126px;top:373px;width:1px;height:20px;background:#dadada"></div>
<div style="position:absolute;left:131px;top:376px;white-space:nowrap;font:normal 11px/14px 'Liberation Sans', sans-serif;color:#000000;">17-10077-3</div>
<div style="position:absolute;left:201px;top:373px;width:1px;height:20px;background:#dadada"></div>
<div style="position:absolute;left:206px;top:376px;white-space:nowrap;font:normal 11px/14px 'Liberation Sans', sans-serif;color:#000000;">Offen</div>
<div style="position:absolute;left:276px;top:373px;width:1px;height:20px;background:#dadada"></div>
<div style="position:absolute;left:280px;top:376px;white-space:nowrap;font:normal 11px/14px 'Liberation Sans', sans-serif;color:#000000;">Beladen</div>
<div style="position:absolute;left:333px;top:373px;width:1px;height:20px;background:#dadada"></div>
<div style="position:absolute;left:337px;top:376px;white-space:nowrap;font:normal 11px/14px 'Liberation Sans', sans-serif;color:#000000;letter-spacing:-0.800px;word-spacing:1.100px;">LAGER SÜD</div>
<div style="position:absolute;left:454px;top:373px;width:1px;height:20px;background:#dadada"></div>
<div style="position:absolute;left:459px;top:376px;white-space:nowrap;font:normal 11px/14px 'Liberation Sans', sans-serif;color:#000000;">90431</div>
<div style="position:absolute;left:509px;top:373px;width:1px;height:20px;background:#dadada"></div>
<div style="position:absolute;left:513px;top:376px;white-space:nowrap;font:normal 11px/14px 'Liberation Sans', sans-serif;color:#000000;">Nürnberg</div>
<div style="position:absolute;left:584px;top:373px;width:1px;height:20px;background:#dadada"></div>
<svg style="position:absolute;left:616px;top:377px;" width="12" height="12" viewBox="0 0 12 12"><rect x="0.5" y="0.5" width="11" height="11" rx="1.5" fill="#fbfdff" stroke="#5fa2ec"/><rect x="2" y="2" width="8" height="8" fill="url(#gc)"/></svg>
<div style="position:absolute;left:659px;top:373px;width:1px;height:20px;background:#dadada"></div>
<div style="position:absolute;right:422px;top:376px;white-space:nowrap;font:normal 11px/14px 'Liberation Sans', sans-serif;color:#000000;text-align:right;">1</div>
<div style="position:absolute;left:720px;top:373px;width:1px;height:20px;background:#dadada"></div>
<div style="position:absolute;right:357px;top:376px;white-space:nowrap;font:normal 11px/14px 'Liberation Sans', sans-serif;color:#000000;text-align:right;">10,00</div>
<div style="position:absolute;left:785px;top:373px;width:1px;height:20px;background:#dadada"></div>
<div style="position:absolute;left:786px;top:373px;width:74px;height:20px;background:#ffffff"></div>
<div style="position:absolute;right:282px;top:376px;white-space:nowrap;font:normal 11px/14px 'Liberation Sans', sans-serif;color:#000000;text-align:right;">0,00</div>
<div style="position:absolute;left:860px;top:373px;width:1px;height:20px;background:#dadada"></div>
<div style="position:absolute;left:864px;top:376px;white-space:nowrap;font:normal 11px/14px 'Liberation Sans', sans-serif;color:#000000;letter-spacing:-0.650px;word-spacing:0.950px;">DÜSSELDO…</div>
<div style="position:absolute;left:935px;top:373px;width:1px;height:20px;background:#dadada"></div>
<div style="position:absolute;right:123px;top:376px;white-space:nowrap;font:normal 11px/14px 'Liberation Sans', sans-serif;color:#000000;text-align:right;">1.455,00</div>
<div style="position:absolute;left:1019px;top:373px;width:1px;height:20px;background:#dadada"></div>
<div style="position:absolute;left:1020px;top:373px;width:87px;height:20px;background:#ffffff"></div>
<div style="position:absolute;right:35px;top:376px;white-space:nowrap;font:normal 11px/14px 'Liberation Sans', sans-serif;color:#000000;text-align:right;">0,00</div>
<div style="position:absolute;left:1107px;top:373px;width:1px;height:20px;background:#dadada"></div>
<div style="position:absolute;left:6px;top:393px;width:15px;height:22px;background:linear-gradient(#f4f4f4,#e0e0e0);border:1px solid #a0a0a0;box-shadow:inset 1px 1px 0 #fff,inset -1px -1px 0 #fff"></div>
<div style="position:absolute;left:38px;top:393px;width:1101px;height:22px;background:#eef8e3;border-top:1px solid #d8d8d8;border-left:1px solid #d8d8d8"></div>
<div style="position:absolute;left:39px;top:394px;width:28px;height:20px;background:#ffffff"></div>
<svg style="position:absolute;left:47px;top:398px;" width="12" height="12" viewBox="0 0 12 12"><rect x="0.5" y="0.5" width="11" height="11" rx="1.5" fill="#fbfdff" stroke="#5fa2ec"/><rect x="2" y="2" width="8" height="8" fill="url(#gc)"/></svg>
<div style="position:absolute;left:67px;top:394px;width:1px;height:21px;background:#d8d8d8"></div>
<div style="position:absolute;left:67px;top:394px;width:1px;height:20px;background:#dadada"></div>
<div style="position:absolute;left:72px;top:397px;white-space:nowrap;font:normal 11px/14px 'Liberation Sans', sans-serif;color:#000000;letter-spacing:-0.320px;word-spacing:0.620px;">TR1207</div>
<div style="position:absolute;left:126px;top:394px;width:1px;height:20px;background:#dadada"></div>
<div style="position:absolute;left:131px;top:397px;white-space:nowrap;font:normal 11px/14px 'Liberation Sans', sans-serif;color:#000000;">17-10077-3</div>
<div style="position:absolute;left:201px;top:394px;width:1px;height:20px;background:#dadada"></div>
<div style="position:absolute;left:206px;top:397px;white-space:nowrap;font:normal 11px/14px 'Liberation Sans', sans-serif;color:#000000;">Offen</div>
<div style="position:absolute;left:276px;top:394px;width:1px;height:20px;background:#dadada"></div>
<div style="position:absolute;left:280px;top:397px;white-space:nowrap;font:normal 11px/14px 'Liberation Sans', sans-serif;color:#000000;">Entladen</div>
<div style="position:absolute;left:333px;top:394px;width:1px;height:20px;background:#dadada"></div>
<div style="position:absolute;left:337px;top:397px;white-space:nowrap;font:normal 11px/14px 'Liberation Sans', sans-serif;color:#000000;letter-spacing:-0.800px;word-spacing:1.100px;">KLOIBER-AUGSBURG</div>
<div style="position:absolute;left:454px;top:394px;width:1px;height:20px;background:#dadada"></div>
<div style="position:absolute;left:459px;top:397px;white-space:nowrap;font:normal 11px/14px 'Liberation Sans', sans-serif;color:#000000;">86156</div>
<div style="position:absolute;left:509px;top:394px;width:1px;height:20px;background:#dadada"></div>
<div style="position:absolute;left:514px;top:397px;white-space:nowrap;font:normal 11px/14px 'Liberation Sans', sans-serif;color:#000000;">Augsburg</div>
<div style="position:absolute;left:584px;top:394px;width:1px;height:20px;background:#dadada"></div>
<svg style="position:absolute;left:616px;top:398px;" width="12" height="12" viewBox="0 0 12 12"><rect x="0.5" y="0.5" width="11" height="11" rx="1.5" fill="#fbfdff" stroke="#5fa2ec"/><rect x="2" y="2" width="8" height="8" fill="url(#gc)"/></svg>
<div style="position:absolute;left:659px;top:394px;width:1px;height:20px;background:#dadada"></div>
<div style="position:absolute;right:422px;top:397px;white-space:nowrap;font:normal 11px/14px 'Liberation Sans', sans-serif;color:#000000;text-align:right;">1</div>
<div style="position:absolute;left:720px;top:394px;width:1px;height:20px;background:#dadada"></div>
<div style="position:absolute;right:357px;top:397px;white-space:nowrap;font:normal 11px/14px 'Liberation Sans', sans-serif;color:#000000;text-align:right;">10,00</div>
<div style="position:absolute;left:785px;top:394px;width:1px;height:20px;background:#dadada"></div>
<div style="position:absolute;left:786px;top:394px;width:74px;height:20px;background:#ffffff"></div>
<div style="position:absolute;right:282px;top:397px;white-space:nowrap;font:normal 11px/14px 'Liberation Sans', sans-serif;color:#000000;text-align:right;">0,00</div>
<div style="position:absolute;left:860px;top:394px;width:1px;height:20px;background:#dadada"></div>
<div style="position:absolute;left:864px;top:397px;white-space:nowrap;font:normal 11px/14px 'Liberation Sans', sans-serif;color:#000000;letter-spacing:-0.650px;word-spacing:0.950px;">DÜSSELDO…</div>
<div style="position:absolute;left:935px;top:394px;width:1px;height:20px;background:#dadada"></div>
<div style="position:absolute;right:123px;top:397px;white-space:nowrap;font:normal 11px/14px 'Liberation Sans', sans-serif;color:#000000;text-align:right;">1.455,00</div>
<div style="position:absolute;left:1019px;top:394px;width:1px;height:20px;background:#dadada"></div>
<div style="position:absolute;left:1020px;top:394px;width:87px;height:20px;background:#ffffff"></div>
<div style="position:absolute;right:35px;top:397px;white-space:nowrap;font:normal 11px/14px 'Liberation Sans', sans-serif;color:#000000;text-align:right;">0,00</div>
<div style="position:absolute;left:1107px;top:394px;width:1px;height:20px;background:#dadada"></div>
<div style="position:absolute;left:38px;top:414px;width:1101px;height:1px;background:#d0d0d0"></div>
<div style="position:absolute;left:6px;top:414px;width:15px;height:28px;background:linear-gradient(#f4f4f4,#e0e0e0);border:1px solid #a0a0a0;box-shadow:inset 1px 1px 0 #fff,inset -1px -1px 0 #fff"></div>
<div style="position:absolute;left:39px;top:415px;width:1100px;height:26px;background:linear-gradient(#f8f8f8,#dcdcdc);border:1px solid #a4a4a4;border-right:none;box-shadow:inset 1px 1px 0 #fff,inset 0 -1px 0 #fafafa"></div>
<div style="position:absolute;left:247px;top:24px;width:142px;height:32px;border:5px solid #fa7d0a;border-radius:5px"></div>
<div style="position:absolute;left:33px;top:299px;width:36px;height:30px;border:5px solid #fa7d0a;border-radius:5px;background:#fa7d0a"></div>
<div style="position:absolute;left:38px;top:304px;width:26px;height:20px;background:#f5c84e;border:1px dotted #000"></div>
<svg style="position:absolute;left:47px;top:308px" width="12" height="12" viewBox="0 0 12 12"><rect x="0.5" y="0.5" width="11" height="11" rx="1.5" fill="#fbfdff" stroke="#5fa2ec"/><rect x="2" y="2" width="8" height="8" fill="url(#gc)"/><path d="M2.4 5.1 L5.5 8.2 L9.6 4.1" fill="none" stroke="#1e62cc" stroke-width="2.4"/></svg>
</body></html>
